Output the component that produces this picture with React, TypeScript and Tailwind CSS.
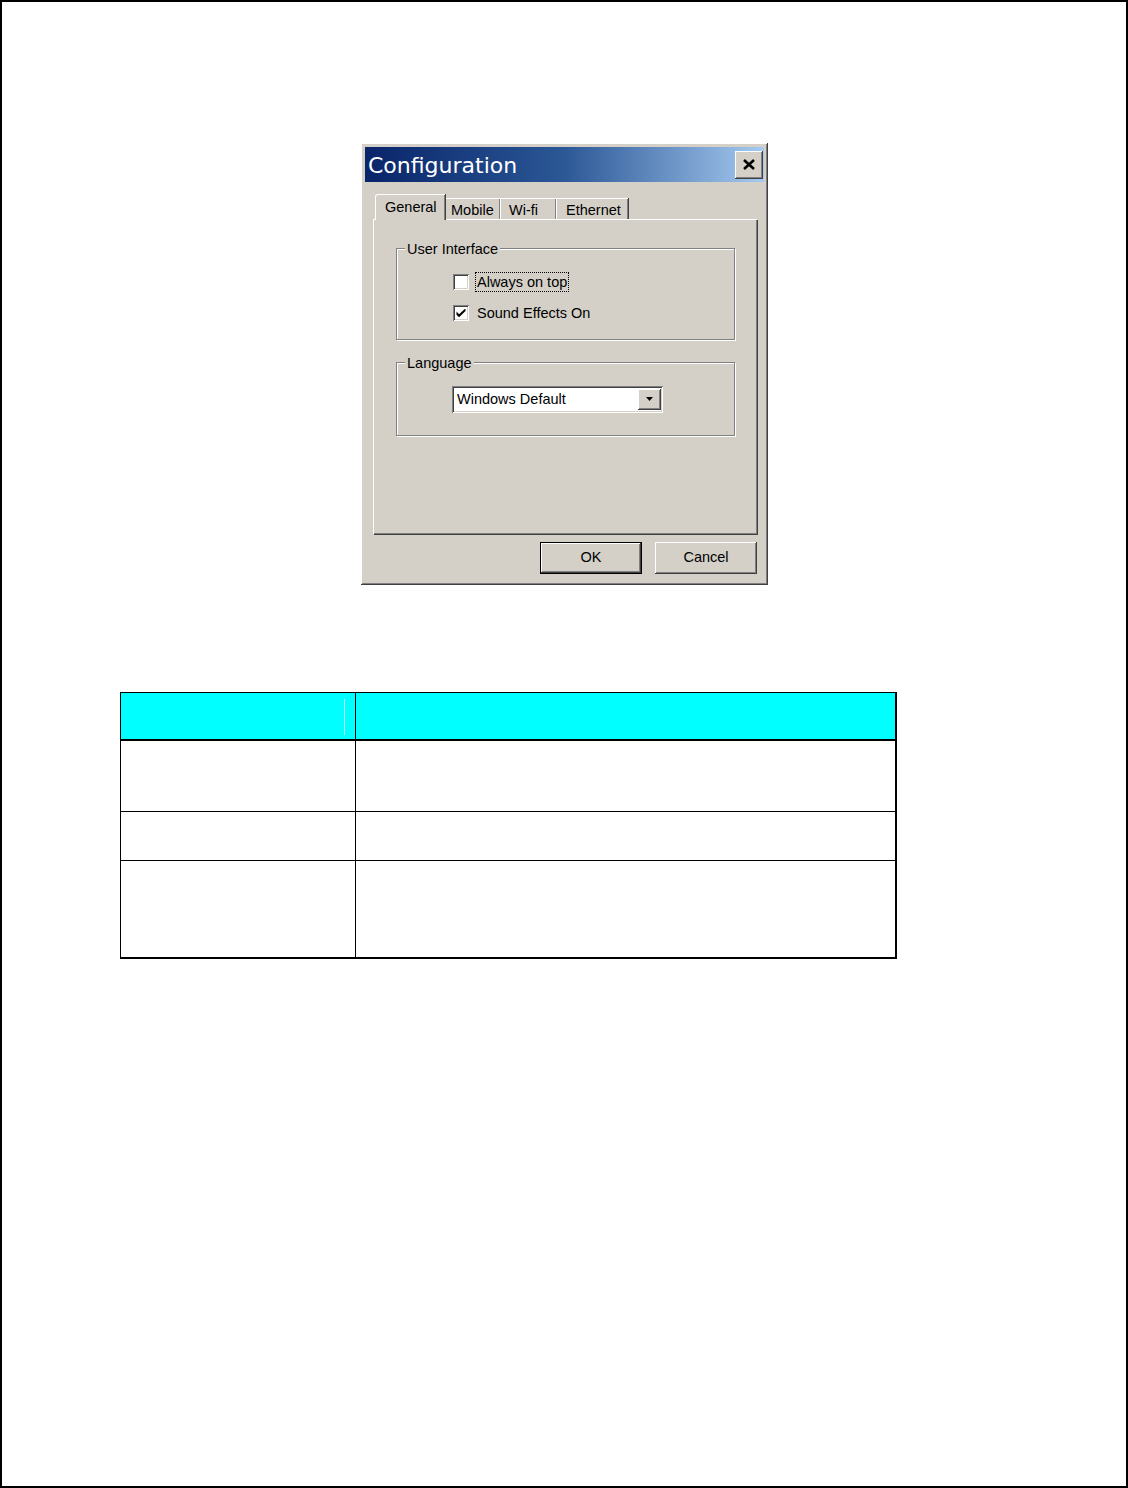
import React from 'react';

const raised =
  'shadow-[inset_-1px_-1px_#404040,inset_1px_1px_#ffffff,inset_-2px_-2px_#808080,inset_2px_2px_#d4d0c8]';
const sunken =
  'shadow-[inset_1px_1px_#808080,inset_-1px_-1px_#ffffff,inset_2px_2px_#404040,inset_-2px_-2px_#d4d0c8]';

const GroupBox: React.FC<{ title: string; className?: string; children?: React.ReactNode }> = ({ title, className, children }) => (
  <div className={`relative border border-[#808080] shadow-[1px_1px_#ffffff,inset_1px_1px_#ffffff] ${className ?? ''}`}>
    <span className="absolute -top-[9px] left-[8px] bg-[#d4d0c8] px-[2px] leading-[18px]">{title}</span>
    {children}
  </div>
);

const Checkbox: React.FC<{ checked?: boolean }> = ({ checked }) => (
  <div className={`w-[16px] h-[16px] bg-white ${sunken} flex items-center justify-center shrink-0`}>
    {checked && (
      <svg width="10" height="9" viewBox="0 0 7 7">
        <path d="M0 2 L0 4.5 L2 6.5 L7 1.5 L7 -0.5 L2 4 Z" fill="#000" />
      </svg>
    )}
  </div>
);

const Tab: React.FC<{ label: string; w: number; pl: number; active?: boolean }> = ({ label, w, pl, active }) =>
  active ? (
    <div
      className="h-[26px] border-t border-l border-white rounded-tl-[3px] shadow-[inset_-1px_0_#808080,1px_0_#404040] bg-[#d4d0c8] relative z-10 -mb-px pt-[3px] leading-[18px]"
      style={{ width: w, paddingLeft: pl }}
    >
      {label}
    </div>
  ) : (
    <div
      className="h-[21px] border-t border-l border-white shadow-[inset_-1px_0_#808080,1px_0_#404040] pt-[2px] leading-[18px]"
      style={{ width: w, paddingLeft: pl }}
    >
      {label}
    </div>
  );

const Button: React.FC<{ label: string; def?: boolean }> = ({ label, def }) => (
  <div
    className={`w-[102px] h-[32px] flex items-center justify-center ${
      def
        ? 'border border-black shadow-[inset_-1px_-1px_#404040,inset_1px_1px_#ffffff,inset_-2px_-2px_#808080]'
        : raised
    }`}
  >
    {label}
  </div>
);

export default function App() {
  return (
    <div className="w-[1128px] h-[1488px] bg-white border-2 border-black pt-[141px] font-['Liberation_Sans',Arial,sans-serif] text-[14.5px] text-black">
      {/* Dialog */}
      <div className={`ml-[359px] w-[407px] h-[442px] bg-[#d4d0c8] ${raised} p-[4px] flex flex-col`}>
        <div className="h-[35px] bg-linear-to-r from-[#0a246a] via-[#2c5896] to-[#a6caf0] flex items-center justify-between pl-[3px] pr-[1px]">
          <span className="text-white text-[22px] font-['DejaVu_Sans',Verdana,sans-serif] leading-none mt-[3px]">Configuration</span>
          <div className={`w-[28px] h-[28px] bg-[#d4d0c8] ${raised} flex items-center justify-center`}>
            <svg width="12" height="11" viewBox="0 0 12 11">
              <path d="M1 1 L11 10 M11 1 L1 10" stroke="#000" strokeWidth="2.6" />
            </svg>
          </div>
        </div>

        {/* Tabs */}
        <div className="mt-[12px] ml-[10px] flex items-end">
          <Tab label="General" w={70} pl={9} active />
          <Tab label="Mobile" w={55} pl={5} />
          <Tab label="Wi-fi" w={56} pl={8} />
          <Tab label="Ethernet" w={72} pl={9} />
        </div>

        {/* Panel */}
        <div className="ml-[8px] w-[384px] h-[315px] border-t border-l border-white shadow-[inset_-1px_-1px_#808080,1px_1px_#404040] pt-[28px] pl-[22px]">
          <GroupBox title="User Interface" className="w-[339px] h-[92px]">
            <div className="pl-[56px] pt-[24px] flex flex-col gap-[13px]">
              <div className="flex items-center gap-[7px]">
                <Checkbox />
                <span className="outline-1 outline-dotted outline-black px-px leading-[18px]">Always on top</span>
              </div>
              <div className="flex items-center gap-[8px]">
                <Checkbox checked />
                <span className="leading-[18px]">Sound Effects On</span>
              </div>
            </div>
          </GroupBox>

          <GroupBox title="Language" className="mt-[22px] w-[339px] h-[74px]">
            <div className="pl-[55px] pt-[23px]">
              <div className={`w-[211px] h-[27px] bg-white ${sunken} flex items-center justify-between pl-[5px] pr-[2px]`}>
                <span className="leading-none">Windows Default</span>
                <div className={`w-[23px] h-[21px] bg-[#d4d0c8] ${raised} flex items-center justify-center`}>
                  <svg width="8" height="5" viewBox="0 0 8 5">
                    <path d="M0 0 H7 L3.5 4 Z" fill="#000" />
                  </svg>
                </div>
              </div>
            </div>
          </GroupBox>
        </div>

        {/* Buttons */}
        <div className="mt-[8px] ml-[175px] flex gap-[13px]">
          <Button label="OK" def />
          <Button label="Cancel" />
        </div>
      </div>

      {/* Table */}
      <div className="mt-[107px] ml-[118px] w-[777px] border-l border-t border-black border-r-2 border-b-2">
        <div className="grid grid-cols-[235px_1fr] h-[48px] bg-[#00ffff] border-b-2 border-black">
          <div className="border-r border-black relative">
            <div className="absolute right-[10px] top-[6px] h-[36px] w-px bg-[#b8ffff]" />
          </div>
          <div />
        </div>
        <div className="grid grid-cols-[235px_1fr] h-[71px] border-b border-black">
          <div className="border-r border-black" />
          <div />
        </div>
        <div className="grid grid-cols-[235px_1fr] h-[49px] border-b border-black">
          <div className="border-r border-black" />
          <div />
        </div>
        <div className="grid grid-cols-[235px_1fr] h-[96px]">
          <div className="border-r border-black" />
          <div />
        </div>
      </div>
    </div>
  );
}
